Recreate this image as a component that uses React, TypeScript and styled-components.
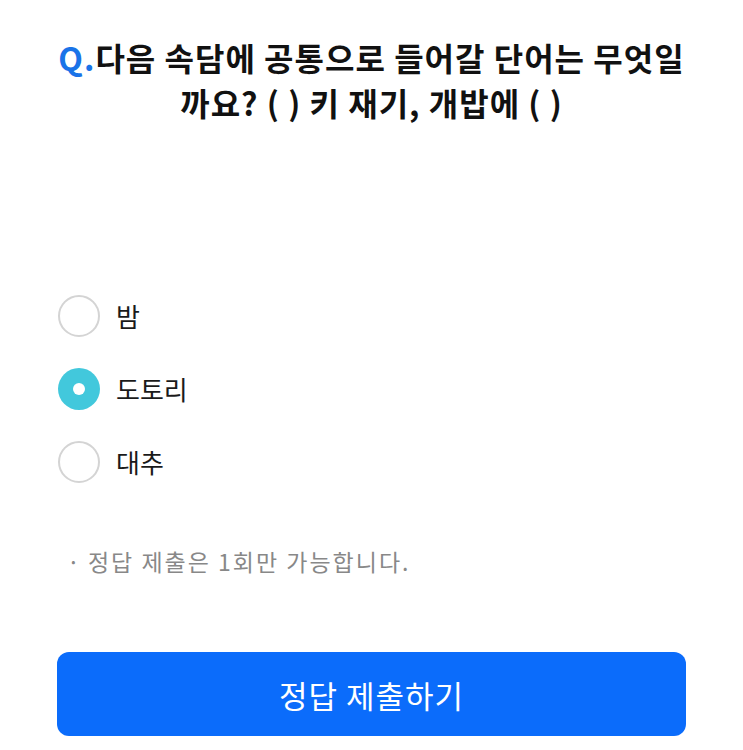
import React, { useState } from "react";
import styled, { createGlobalStyle } from "styled-components";

const Global = createGlobalStyle`
  html, body { margin: 0; padding: 0; background: #ffffff; }
  body { font-family: "Noto Sans CJK KR", "Noto Sans", sans-serif; }
`;

const Page = styled.div`
  width: 743px;
  height: 750px;
  box-sizing: border-box;
  padding: 35px 57px 0 57px;
  display: flex;
  flex-direction: column;
  background: #fff;
`;

const Question = styled.h1`
  margin: 0 -20px;
  font-size: 32px;
  font-weight: 700;
  line-height: 45px;
  color: #111;
  text-align: center;
  letter-spacing: 1px;
`;

const QMark = styled.span`
  color: #1a73e8;
`;

const Options = styled.div`
  display: flex;
  flex-direction: column;
  margin-top: 154px;
`;

const Option = styled.label`
  display: flex;
  align-items: center;
  gap: 16px;
  height: 73px;
  cursor: pointer;
`;

const Circle = styled.span<{ $checked: boolean }>`
  width: 42px;
  height: 42px;
  box-sizing: border-box;
  border-radius: 50%;
  flex: none;
  margin-left: 1px;
  display: flex;
  align-items: center;
  justify-content: center;
  border: ${(p) => (p.$checked ? "none" : "2px solid #d4d4d4")};
  background: ${(p) => (p.$checked ? "#42c8dc" : "#fff")};
  &::after {
    content: "";
    display: ${(p) => (p.$checked ? "block" : "none")};
    width: 12px;
    height: 12px;
    border-radius: 50%;
    background: #fff;
  }
`;

const Label = styled.span`
  font-size: 26px;
  color: #1a1a1a;
  line-height: 1;
`;

const Note = styled.p`
  margin: 52px 0 0 10px;
  font-size: 23px;
  color: #888;
  display: flex;
  align-items: center;
  gap: 6px;
  line-height: 1;
  letter-spacing: 2px;
`;

const Submit = styled.button`
  margin-top: 79px;
  width: 629px;
  height: 84px;
  border: none;
  border-radius: 12px;
  background: #0b6cfb;
  color: #fff;
  font-family: "Noto Sans CJK KR", "Noto Sans", sans-serif;
  font-size: 31px;
  letter-spacing: 1px;
  font-weight: 400;
  cursor: pointer;
`;

const options = ["밤", "도토리", "대추"];

export default function App() {
  const [selected, setSelected] = useState(1);
  return (
    <>
      <Global />
      <Page>
        <Question>
          <QMark>Q.</QMark>다음 속담에 공통으로 들어갈 단어는 무엇일
          <br />
          까요? ( ) 키 재기, 개밥에 ( )
        </Question>
        <Options>
          {options.map((o, i) => (
            <Option key={o} onClick={() => setSelected(i)}>
              <Circle $checked={selected === i} />
              <Label>{o}</Label>
            </Option>
          ))}
        </Options>
        <Note>
          <span>·</span>
          <span>정답 제출은 1회만 가능합니다.</span>
        </Note>
        <Submit>정답 제출하기</Submit>
      </Page>
    </>
  );
}
